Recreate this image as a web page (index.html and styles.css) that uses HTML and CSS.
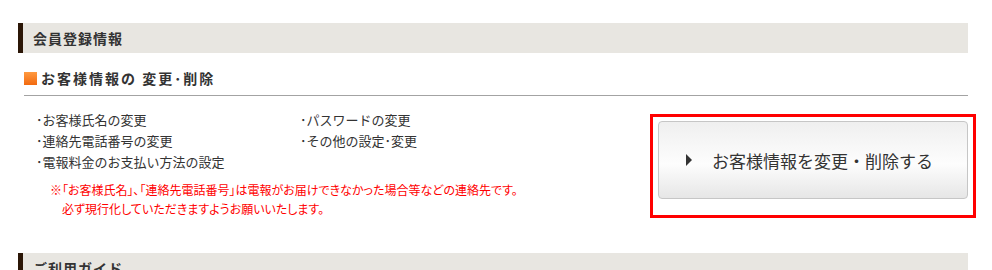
FILE: index.html
```html
<!DOCTYPE html>
<html lang="ja">
<head>
    <meta charset="UTF-8">
    <title>会員登録情報</title>
    <link rel="stylesheet" href="styles.css">
</head>
<body>
    <div class="page">
        <h2 class="box-title">会員登録情報</h2>
        <div class="section">
            <h3 class="sub-title"><span class="mark"></span>お客様情報の 変更･削除</h3>
            <div class="section-body">
                <div class="info">
                    <ul class="menu-list">
                        <li>･お客様氏名の変更</li>
                        <li>･パスワードの変更</li>
                        <li>･連絡先電話番号の変更</li>
                        <li>･その他の設定･変更</li>
                        <li>･電報料金のお支払い方法の設定</li>
                    </ul>
                    <p class="note">
                        <span class="note-line">※「お客様氏名」､「連絡先電話番号」は電報がお届けできなかった場合等などの連絡先です。</span>
                        <span class="note-line indent">必ず現行化していただきますようお願いいたします。</span>
                    </p>
                </div>
                <div class="btn-frame">
                    <a class="btn" href="#"><span class="arrow"></span>お客様情報を変更・削除する</a>
                </div>
            </div>
        </div>
        <h2 class="box-title">ご利用ガイド</h2>
    </div>
</body>
</html>
```

FILE: styles.css
```css
body, html {
    margin: 0;
    padding: 0;
    background: #fff;
    color: #333;
    font-family: "Noto Sans CJK JP", sans-serif;
}
.page {
    width: 950px;
    margin-left: 18px;
    padding-top: 23px;
}
.box-title {
    margin: 0;
    height: 30px;
    line-height: 30px;
    background-color: #e8e6e1;
    border-left: 5px solid #2b1607;
    padding-left: 10px;
    font-size: 14px;
    font-weight: bold;
    letter-spacing: 1px;
    color: #333;
}
.section {
    margin-left: 6px;
    padding-bottom: 35px;
}
.sub-title {
    margin: 0;
    padding-top: 16px;
    height: 26px;
    line-height: 18px;
    border-bottom: 1px solid #a3a3a3;
    font-size: 14px;
    font-weight: bold;
    letter-spacing: 2px;
    display: flex;
    align-items: flex-start;
    white-space: pre;
}
.mark {
    display: inline-block;
    width: 13px;
    height: 13px;
    margin: 3px 4px 0 0;
    background: linear-gradient(#ff9a40, #f26a10);
}
.section-body {
    display: flex;
    justify-content: space-between;
    padding: 13px 0 0 12px;
}
.menu-list {
    list-style: none;
    margin: 0;
    padding: 0;
    display: grid;
    grid-template-columns: 264px auto;
    font-size: 13px;
    line-height: 21px;
}
.note {
    margin: 8px 0 0 14px;
    color: #f00;
    font-size: 12px;
    line-height: 19px;
    font-feature-settings: "palt";
}
.note-line {
    display: block;
}
.note-line.indent {
    padding-left: 12px;
}
.btn-frame {
    border: 3px solid #f00;
    padding: 4px 5px 3px 5px;
    margin: 5px -8px 0 0;
}
.btn {
    display: flex;
    align-items: center;
    width: 308px;
    height: 76px;
    border: 1px solid #c6c6c6;
    border-radius: 4px;
    background: linear-gradient(#efefef, #fdfdfd 55%, #e6e6e6);
    color: #333;
    font-size: 17px;
    text-decoration: none;
}
.arrow {
    width: 0;
    height: 0;
    border-top: 6px solid transparent;
    border-bottom: 6px solid transparent;
    border-left: 6px solid #333;
    margin: 0 20px 0 27px;
}
```
